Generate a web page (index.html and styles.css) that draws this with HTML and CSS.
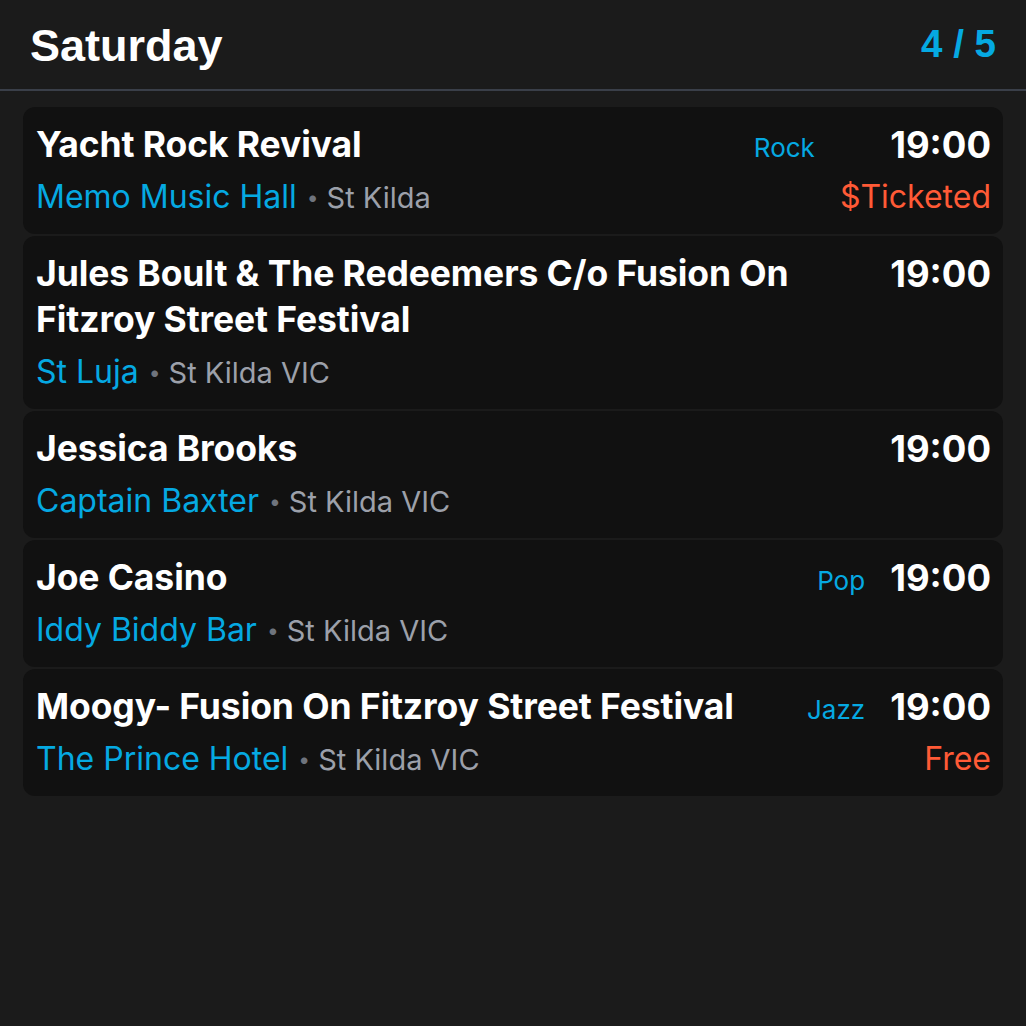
FILE: index.html
```html
<!DOCTYPE html>
<html lang="en">
<head>
<meta charset="utf-8">
<title>Saturday</title>
<link rel="stylesheet" href="styles.css">
</head>
<body>
<header class="header">
  <h1 class="day">Saturday</h1>
  <div class="count">4 / 5</div>
</header>
<main class="list">
  <article class="card">
    <div class="main">
      <div class="title">Yacht Rock Revival</div>
      <div class="venue"><span class="name">Memo Music Hall</span><span class="dot">•</span><span class="loc">St Kilda</span></div>
    </div>
    <div class="genre">Rock</div>
    <div class="side">
      <div class="time">19:00</div>
      <div class="price">$Ticketed</div>
    </div>
  </article>
  <article class="card">
    <div class="main">
      <div class="title">Jules Boult &amp; The Redeemers C/o Fusion On Fitzroy Street Festival</div>
      <div class="venue"><span class="name">St Luja</span><span class="dot">•</span><span class="loc">St Kilda VIC</span></div>
    </div>
    <div class="side">
      <div class="time">19:00</div>
    </div>
  </article>
  <article class="card">
    <div class="main">
      <div class="title">Jessica Brooks</div>
      <div class="venue"><span class="name">Captain Baxter</span><span class="dot">•</span><span class="loc">St Kilda VIC</span></div>
    </div>
    <div class="side">
      <div class="time">19:00</div>
    </div>
  </article>
  <article class="card">
    <div class="main">
      <div class="title">Joe Casino</div>
      <div class="venue"><span class="name">Iddy Biddy Bar</span><span class="dot">•</span><span class="loc">St Kilda VIC</span></div>
    </div>
    <div class="genre">Pop</div>
    <div class="side">
      <div class="time">19:00</div>
    </div>
  </article>
  <article class="card">
    <div class="main">
      <div class="title">Moogy- Fusion On Fitzroy Street Festival</div>
      <div class="venue"><span class="name">The Prince Hotel</span><span class="dot">•</span><span class="loc">St Kilda VIC</span></div>
    </div>
    <div class="genre">Jazz</div>
    <div class="side">
      <div class="time">19:00</div>
      <div class="price">Free</div>
    </div>
  </article>
</main>
</body>
</html>
```

FILE: styles.css
```css
* { box-sizing: border-box; }

html, body {
  margin: 0;
  padding: 0;
  background: #1b1b1b;
  height: 100%;
}

body {
  font-family: Inter, "Noto Sans", sans-serif;
  color: #ffffff;
}

.header {
  display: flex;
  align-items: center;
  justify-content: space-between;
  height: 91px;
  padding: 0 30px 0 30px;
  border-bottom: 2px solid #3a3f49;
}

.day {
  margin: 0;
  font-family: "Liberation Sans", Arial, sans-serif;
  font-weight: 700;
  font-size: 45px;
  line-height: 1;
  color: #ffffff;
  margin-top: 2px;
}

.count {
  font-family: "Liberation Sans", Arial, sans-serif;
  font-weight: 700;
  font-size: 38.5px;
  line-height: 1;
  color: #05a9e2;
}

.list {
  display: flex;
  flex-direction: column;
  gap: 2px;
  padding: 16px 23px 0 23px;
}

.card {
  display: flex;
  align-items: flex-start;
  background: #111111;
  border-radius: 12px;
  padding: 15px 12px 14px 13px;
}

.main {
  flex: 1;
  min-width: 0;
}

.title {
  font-weight: 700;
  font-size: 35.5px;
  line-height: 46px;
  letter-spacing: -0.1px;
  color: #ffffff;
}

.venue {
  margin-top: 6px;
  height: 46px;
  font-size: 32px;
  line-height: 46px;
  white-space: nowrap;
}

.name {
  color: #05a9e2;
}

.dot {
  font-size: 21px;
  color: #6f747d;
  margin: 0 8px 0 10px;
  position: relative;
  top: -3px;
}

.loc {
  font-size: 29px;
  color: #9ca0aa;
}

.genre {
  font-size: 26px;
  line-height: 46px;
  margin-top: 3px;
  color: #05a9e2;
  margin-left: 20px;
  margin-right: 25px;
}

.side {
  display: flex;
  flex-direction: column;
  align-items: flex-end;
}

.time {
  font-weight: 700;
  font-size: 36.5px;
  line-height: 46px;
  color: #ffffff;
}

.price {
  margin-top: 6px;
  height: 46px;
  font-size: 32px;
  line-height: 46px;
  color: #ff5a36;
}
```
